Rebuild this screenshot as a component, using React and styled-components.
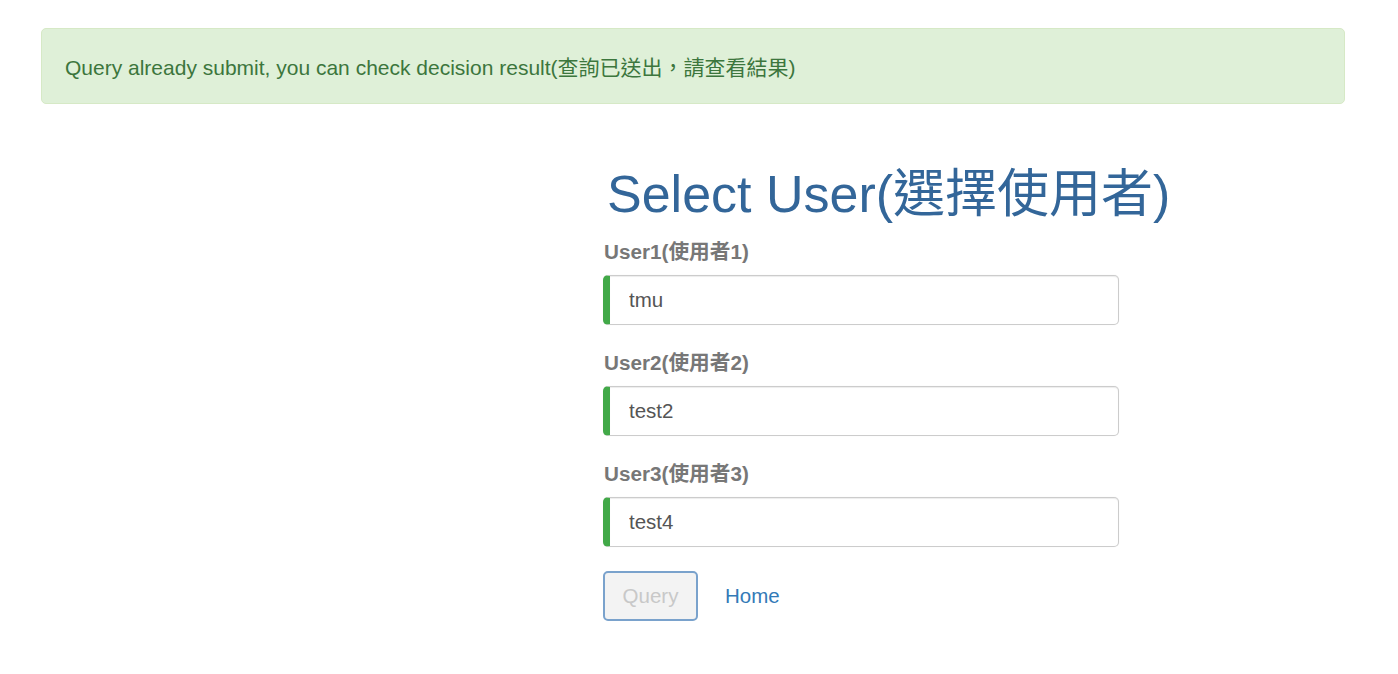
import React from "react";
import styled, { createGlobalStyle } from "styled-components";

const Global = createGlobalStyle`
  html, body { margin: 0; padding: 0; background: #fff; }
  body {
    font-family: "Liberation Sans", Arial, "Noto Sans CJK TC", sans-serif;
    color: #333;
  }
  * { box-sizing: border-box; }
`;

const Page = styled.div`
  width: 1398px;
  min-height: 674px;
  padding-top: 28px;
`;

const Alert = styled.div`
  margin-left: 41px;
  width: 1304px;
  height: 76px;
  display: flex;
  align-items: center;
  padding: 0 23px 1px;
  background: #dff0d8;
  border: 1px solid #d6e9c6;
  border-radius: 5px;
  color: #3c763d;
  font-size: 21px;
`;

const Form = styled.div`
  margin-left: 603px;
  width: 516px;
  padding-top: 62px;
`;

const Title = styled.h1`
  margin: 0 0 14px 4px;
  font-size: 52px;
  font-weight: 400;
  line-height: 57px;
  color: #336699;
  white-space: nowrap;
`;

const Group = styled.div`
  margin-bottom: ${(p) => p.$mb}px;
`;

const Label = styled.label`
  display: block;
  font-size: 20.7px;
  font-weight: 700;
  line-height: 30px;
  color: #777;
  margin-bottom: 8px;
  padding-left: 1px;
`;

const Input = styled.input`
  display: block;
  width: 100%;
  height: 50px;
  padding: 0 19px;
  font-family: inherit;
  font-size: 20.5px;
  color: #555;
  background: #fff;
  border: 1px solid #ccc;
  border-left: 7px solid #42a948;
  border-radius: 5px;
  box-shadow: inset 0 1px 1px rgba(0, 0, 0, 0.075), 0 0 1px rgba(0,0,0,0.1);
  outline: none;
`;

const Actions = styled.div`
  display: flex;
  align-items: center;
  gap: 27px;
  margin-top: 24px;
`;

const Button = styled.button`
  width: 95px;
  height: 50px;
  font-family: inherit;
  font-size: 20.5px;
  color: #c8c8c8;
  background: #f3f3f3;
  border: 2px solid #7aa2cc;
  border-radius: 5px;
  cursor: not-allowed;
`;

const Link = styled.a`
  font-size: 20.5px;
  color: #337ab7;
  text-decoration: none;
`;

const users = [
  { label: "User1(使用者1)", value: "tmu" },
  { label: "User2(使用者2)", value: "test2" },
  { label: "User3(使用者3)", value: "test4" },
];

export default function App() {
  return (
    <Page>
      <Global />
      <Alert>Query already submit, you can check decision result(查詢已送出，請查看結果)</Alert>
      <Form>
        <Title>Select User(選擇使用者)</Title>
        {users.map((u, i) => (
          <Group key={u.label} $mb={i === users.length - 1 ? 0 : 23}>
            <Label>{u.label}</Label>
            <Input readOnly value={u.value} />
          </Group>
        ))}
        <Actions>
          <Button disabled>Query</Button>
          <Link href="#">Home</Link>
        </Actions>
      </Form>
    </Page>
  );
}
